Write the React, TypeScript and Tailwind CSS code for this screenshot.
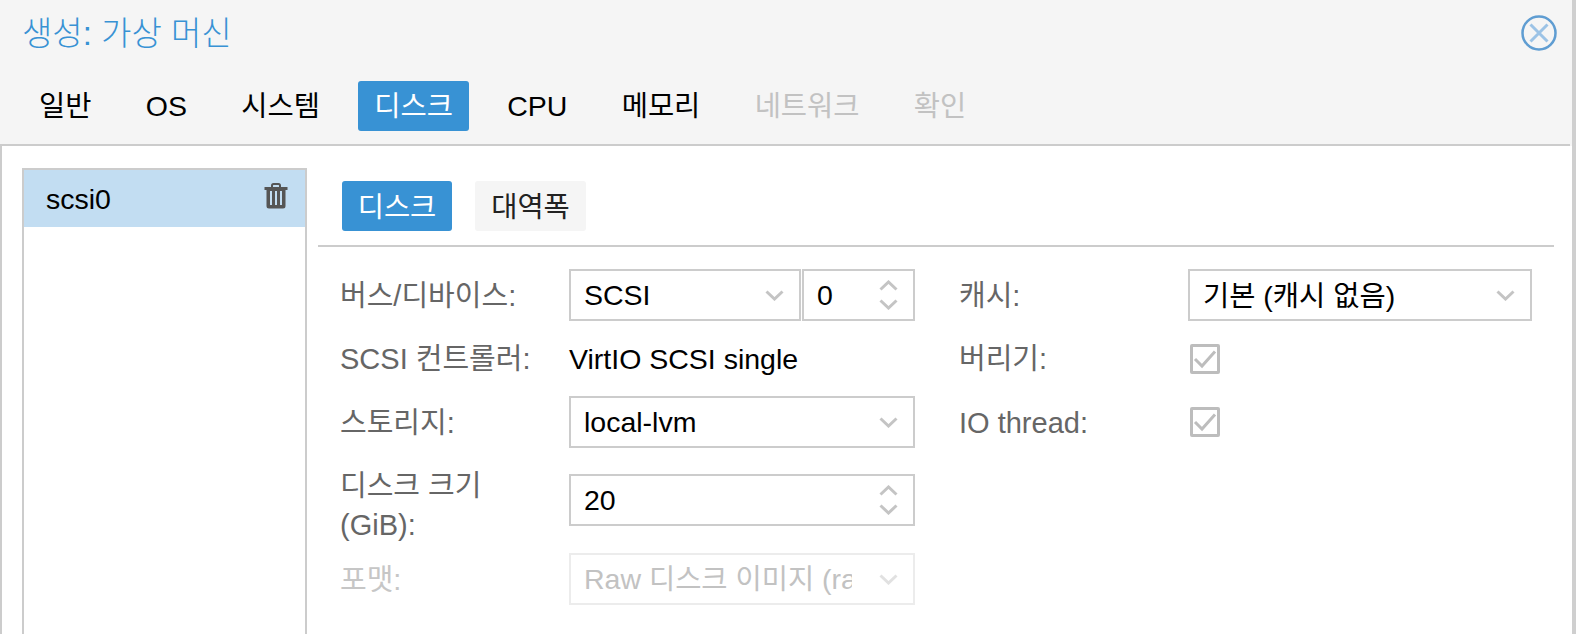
const FONT = "font-['Liberation_Sans','Noto_Sans_CJK_KR',sans-serif]"

function Chevron({ up, className = '' }: { up?: boolean; className?: string }) {
  return (
    <svg width="19" height="11" viewBox="0 0 19 11" className={className}>
      <path d={up ? 'M1.5 9.5 L9.5 2 L17.5 9.5' : 'M1.5 1.5 L9.5 9 L17.5 1.5'} fill="none" stroke="#c4c4c4" strokeWidth="3" />
    </svg>
  )
}

function Spinner() {
  return (
    <div className="flex flex-col gap-[8px] shrink-0 mr-[15px]">
      <Chevron up />
      <Chevron />
    </div>
  )
}

function Field({ value, className = '', children }: { value: string; className?: string; children: React.ReactNode }) {
  return (
    <div className={`h-[52px] border-2 border-[#cccccc] bg-white flex items-center justify-between pl-[13px] text-black ${className}`}>
      <span className="truncate">{value}</span>
      {children}
    </div>
  )
}

function Check() {
  return (
    <div className="w-[30px] h-[30px] ml-[2px] border-[3px] border-[#bdbdbd] rounded-[2px] flex items-center justify-center">
      <svg width="24" height="20" viewBox="0 0 24 20" className="shrink-0">
        <path d="M2 10 L9 17 L22 2.5" fill="none" stroke="#bdbdbd" strokeWidth="3" />
      </svg>
    </div>
  )
}

function Label({ children, className = '' }: { children: React.ReactNode; className?: string }) {
  return <div className={`w-[229px] shrink-0 pt-[2px] text-[29px] text-[#666666] leading-[38.5px] ${className}`}>{children}</div>
}

export default function App() {
  const tabs = ['일반', 'OS', '시스템', '디스크', 'CPU', '메모리', '네트워크', '확인']

  return (
    <div className={`${FONT} w-[1576px] h-[634px] overflow-hidden bg-white flex text-[28.5px]`}>
      <div className="flex-1 flex flex-col min-w-0">
        {/* header */}
        <div className="h-[146px] shrink-0 bg-[#f5f5f5] relative">
          <div className="pl-[22px] pt-[13px] text-[33px] leading-[42px] text-[#3892d4] font-light">생성: 가상 머신</div>
          <div className="flex mt-[26px] pl-[22.5px] gap-[21.3px]">
            {tabs.map((t, i) => (
              <div
                key={t}
                className={`h-[50px] px-[16.5px] leading-[51px] rounded-[3px] ${
                  i === 3 ? 'bg-[#3892d4] text-white' : i > 5 ? 'text-[#c2c2c2]' : 'text-black'
                }`}
              >
                {t}
              </div>
            ))}
          </div>
          <div className="h-[2px] bg-[#cccccc] mr-[2px] mt-[13px]" />
          <svg width="38" height="38" viewBox="0 0 38 38" className="absolute left-[1520px] top-[14px] blur-[0.5px]">
            <circle cx="19" cy="19" r="16.5" fill="#f5f5f5" stroke="#5f9dd2" strokeWidth="2.5" />
            <path d="M10.5 10.5 L27.5 27.5 M27.5 10.5 L10.5 27.5" stroke="#9cc3e6" strokeWidth="3" />
          </svg>
        </div>

        {/* body */}
        <div className="flex-1 flex border-l-2 border-[#cccccc] pl-[20px] pt-[22px] min-h-0">
          {/* disk list */}
          <div className="w-[285px] shrink-0 border-2 border-b-0 border-[#cccccc]">
            <div className="h-[57px] bg-[#c2ddf2] flex items-center justify-between pl-[22px] pr-[17px] text-black">
              <span className="pt-[2px]">scsi0</span>
              <svg width="24" height="26" viewBox="0 0 24 26" className="-mt-[6px]">
                <path d="M8 4 V2.5 Q8 1 9.5 1 H14.5 Q16 1 16 2.5 V4" fill="none" stroke="#555555" strokeWidth="2" />
                <path d="M0.5 4 H23.5 V7 H21.5 V23 Q21.5 25.5 19 25.5 H5 Q2.5 25.5 2.5 23 V7 H0.5 Z" fill="#555555" />
                <path d="M7 8 V22 M12 8 V22 M17 8 V22" stroke="#c2ddf2" strokeWidth="2" />
              </svg>
            </div>
          </div>

          {/* disk panel */}
          <div className="flex-1 ml-[11px] mr-[18px] min-w-0">
            <div className="flex h-[79px] border-b-2 border-[#cccccc] pl-[24px] pt-[13px]">
              <div className="h-[50px] w-[110px] bg-[#3892d4] text-white rounded-[3px] text-center leading-[53px]">디스크</div>
              <div className="h-[50px] w-[111px] ml-[23px] bg-[#f5f5f5] text-[#222222] rounded-[3px] text-center leading-[53px]">대역폭</div>
            </div>

            <div className="flex pl-[22px] pt-[22px]">
              {/* left column */}
              <div className="w-[619px] shrink-0">
                <div className="flex items-center h-[52px]">
                  <Label>버스/디바이스:</Label>
                  <div className="flex">
                    <Field value="SCSI" className="w-[232px]">
                      <Chevron className="mr-[15px]" />
                    </Field>
                    <Field value="0" className="w-[113px] ml-[1px]">
                      <Spinner />
                    </Field>
                  </div>
                </div>
                <div className="flex items-center h-[51px] mt-[12px]">
                  <Label>SCSI 컨트롤러:</Label>
                  <span className="text-black pt-[2px]">VirtIO SCSI single</span>
                </div>
                <div className="flex items-center h-[52px] mt-[12px]">
                  <Label>스토리지:</Label>
                  <Field value="local-lvm" className="w-[346px]">
                    <Chevron className="mr-[15px]" />
                  </Field>
                </div>
                <div className="flex items-start mt-[12px]">
                  <Label className="mt-[5px]">디스크 크기<br />(GiB):</Label>
                  <Field value="20" className="w-[346px] mt-[14px]">
                    <Spinner />
                  </Field>
                </div>
                <div className="flex items-center h-[52px] mt-[9px]">
                  <Label className="text-[#c6c6c6]">포맷:</Label>
                  <div className="w-[346px] h-[52px] border-2 border-[#ececec] flex items-center justify-between pl-[13px] text-[#c2c2c2]">
                    <span className="w-[268px] overflow-hidden whitespace-nowrap">Raw 디스크 이미지 (raw)</span>
                    <Chevron className="mr-[15px] opacity-50" />
                  </div>
                </div>
              </div>

              {/* right column */}
              <div className="flex-1">
                <div className="flex items-center h-[52px]">
                  <Label>캐시:</Label>
                  <Field value="기본 (캐시 없음)" className="w-[344px] [&>span]:pt-[2px]">
                    <Chevron className="mr-[15px]" />
                  </Field>
                </div>
                <div className="flex items-center h-[51px] mt-[12px]">
                  <Label>버리기:</Label>
                  <Check />
                </div>
                <div className="flex items-center h-[52px] mt-[12px]">
                  <Label>IO thread:</Label>
                  <Check />
                </div>
              </div>
            </div>
          </div>
        </div>
      </div>
      {/* window edge */}
      <div className="w-[4px] shrink-0 bg-[#cfcfcf]" />
    </div>
  )
}
